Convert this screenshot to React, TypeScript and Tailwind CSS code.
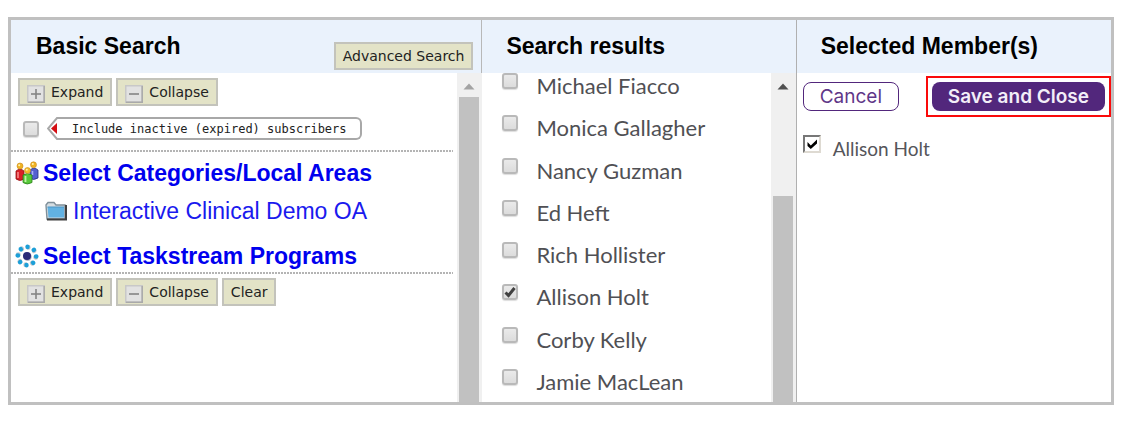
import React, { useState } from 'react';

interface Member {
  id: number;
  name: string;
}

const members: Member[] = [
  { id: 1, name: 'Michael Fiacco' },
  { id: 2, name: 'Monica Gallagher' },
  { id: 3, name: 'Nancy Guzman' },
  { id: 4, name: 'Ed Heft' },
  { id: 5, name: 'Rich Hollister' },
  { id: 6, name: 'Allison Holt' },
  { id: 7, name: 'Corby Kelly' },
  { id: 8, name: 'Jamie MacLean' },
];

function Checkbox({ id, checked, onChange }: { id: string; checked: boolean; onChange: () => void }) {
  return (
    <span className="relative block size-4 shrink-0">
      <input
        id={id}
        type="checkbox"
        checked={checked}
        onChange={onChange}
        className="block size-4 appearance-none rounded-[3px] border-2 border-[#b9b9b9] bg-linear-to-b from-[#eaeaea] to-[#dcdcdc] shadow-[0_1px_1px_#dddddd]"
      />
      {checked && (
        <svg viewBox="0 0 16 16" className="pointer-events-none absolute inset-0 size-4">
          <path d="M3.5 8.5 L6.5 11.5 L12.5 4" fill="none" stroke="#404040" strokeWidth="3" />
        </svg>
      )}
    </span>
  );
}

function ToolButton({ sign, children }: { sign?: 'plus' | 'minus'; children: React.ReactNode }) {
  return (
    <button
      type="button"
      className="flex h-7 items-center gap-1.5 border-2 border-[#c3c3bb] bg-[#e3e3c7] px-[7px] font-['DejaVu_Sans',sans-serif] text-sm whitespace-nowrap text-[#222222]"
    >
      {sign && (
        <svg viewBox="0 0 18 18" className="mt-1 size-[18px]">
          <rect x="0.75" y="0.75" width="16.5" height="16.5" fill="#e2e2e2" stroke="#c8c8c8" strokeWidth="1.5" />
          <path d="M1 17.2 H17.2 V1" fill="none" stroke="#a9a9a9" strokeWidth="1.5" />
          <path d="M4 9 H14" stroke="#858585" strokeWidth="1.6" />
          {sign === 'plus' && <path d="M9 4 V14" stroke="#858585" strokeWidth="1.6" />}
        </svg>
      )}
      {children}
    </button>
  );
}

function Divider() {
  return <div className="mr-1 h-0.5 bg-[repeating-linear-gradient(90deg,#b4b4b4_0_2px,#ffffff_2px_3px)]" />;
}

function Scrollbar({ active, thumb }: { active: boolean; thumb: string }) {
  return (
    <div className="flex w-[25px] shrink-0 flex-col items-center bg-[#f0f0f0] pr-[3px] pl-0.5">
      <svg viewBox="0 0 24 24" className="size-6 shrink-0">
        <path d="M6.5 16.5 L12 10.5 L17.5 16.5 Z" fill={active ? '#505050' : '#a3a3a3'} />
      </svg>
      <div className={`w-5 flex-1 bg-[#c1c1c1] ${thumb}`} />
    </div>
  );
}

function PeopleIcon() {
  return (
    <svg viewBox="0 0 24 24" className="size-6 shrink-0">
      <path d="M1 10 Q5 6.500 9 10 V18 Q5 21 1 18 Z" fill="#d92027" stroke="#8e1414" strokeWidth="0.8" />
      <path d="M15 9 Q19 5.500 23 9 V17 Q18 20 15 17 Z" fill="#5560cf" stroke="#25307f" strokeWidth="0.8" />
      <path d="M3 11 V17" stroke="#f78a8a" strokeWidth="1.6" />
      <path d="M17.500 10 V14" stroke="#a9b0f5" strokeWidth="1.6" />
      <circle cx="5" cy="5" r="3" fill="#f0b323" stroke="#c98c1c" strokeWidth="0.6" />
      <circle cx="18.500" cy="3.800" r="3" fill="#f0b323" stroke="#c98c1c" strokeWidth="0.6" />
      <path d="M8 14 Q12 11 17 14 V21.500 Q12 24.500 8 21.500 Z" fill="#58c93a" stroke="#2b7d1b" strokeWidth="0.8" />
      <path d="M10.500 15 V21" stroke="#c0f3a6" strokeWidth="1.8" />
      <circle cx="12.500" cy="9.500" r="3" fill="#f5bd2c" stroke="#c98c1c" strokeWidth="0.6" />
      <circle cx="11.800" cy="8.700" r="1" fill="#fff2b5" />
      <circle cx="4.200" cy="4.200" r="1" fill="#fff2b5" />
      <circle cx="17.800" cy="3" r="1" fill="#fff2b5" />
    </svg>
  );
}

function FolderIcon() {
  return (
    <svg viewBox="0 0 22 20" className="h-5 w-[22px] shrink-0">
      <path d="M1 4 L3 1.500 H9 L11 4 H20 V18 H2 Z" fill="#d5dde2" stroke="#7f8f99" strokeWidth="1.4" />
      <path d="M2.500 6 H19 V16.500 H3.500 Z" fill="#62b2e2" />
      <path d="M2.500 6 H19" stroke="#4d94c4" strokeWidth="1" />
      <path d="M2 18.500 H21 V4" fill="none" stroke="#3f3f3f" strokeWidth="2" />
    </svg>
  );
}

function ProgramsIcon() {
  const petals = [0, 45, 90, 135, 180, 225, 270, 315];
  return (
    <svg viewBox="0 0 24 24" className="size-6 shrink-0">
      {petals.map((angle) => (
        <g key={angle} transform={`rotate(${angle + 3} 12 12)`}>
          <ellipse cx="12.900" cy="3.200" rx="2.300" ry="2.500" fill="#c2c8cc" />
          <ellipse cx="12" cy="2.800" rx="2.200" ry="2.400" fill="#1c9fd8" />
        </g>
      ))}
      <circle cx="12.600" cy="12.800" r="4.200" fill="#b9b9c4" />
      <circle cx="12" cy="12" r="4" fill="#2b2a78" />
    </svg>
  );
}

export default function App() {
  const [selected, setSelected] = useState<number[]>([6]);
  const [includeInactive, setIncludeInactive] = useState(false);

  const toggle = (id: number) => {
    setSelected(prev => (prev.includes(id) ? prev.filter(s => s !== id) : [...prev, id]));
  };

  return (
    <div className="h-screen bg-white pt-[17px] pr-4 pb-[19px] pl-2 font-['Liberation_Sans',Arial,sans-serif]">
      <div className="grid h-full grid-cols-[471fr_314fr_314fr] border-3 border-[#c0c0c0] bg-white">
        {/* Basic search */}
        <section className="flex min-w-0 flex-col">
          <header className="flex h-[53px] shrink-0 items-center justify-between border-r border-[#b8b8b8] bg-[#eaf2fc] pr-2 pl-[25px]">
            <h2 className="text-[23px] font-bold text-black">Basic Search</h2>
            <div className="mt-[19px]">
              <ToolButton>Advanced Search</ToolButton>
            </div>
          </header>
          <div className="flex min-h-0 flex-1">
            <div className="flex-1 pt-[5px]">
              <div className="flex gap-1 pl-[7px]">
                <ToolButton sign="plus">Expand</ToolButton>
                <ToolButton sign="minus">Collapse</ToolButton>
              </div>
              <div className="flex items-center gap-2 pt-[11px] pb-2.5 pl-3">
                <Checkbox id="inactive" checked={includeInactive} onChange={() => setIncludeInactive(!includeInactive)} />
                <label
                  htmlFor="inactive"
                  className="flex h-[23px] items-center font-['DejaVu_Sans_Mono',monospace] text-xs whitespace-nowrap text-[#222222]"
                >
                  <svg viewBox="0 0 12 23" className="h-[23px] w-3 shrink-0">
                    <path d="M12 1 H10 L1 11.500 L10 22 H12" fill="#ffffff" stroke="#a8a8a8" strokeWidth="2" />
                    <path d="M10 6 V17 L4 11.500 Z" fill="#d40f14" />
                  </svg>
                  <span className="flex h-full items-center rounded-r-md border-y-2 border-r-2 border-[#a8a8a8] px-[13px]">
                    Include inactive (expired) subscribers
                  </span>
                </label>
              </div>
              <Divider />
              <a href="#categories" className="flex h-[42px] items-center gap-1 pl-1 text-[23px] font-bold whitespace-nowrap text-[#0000ee]">
                <PeopleIcon />
                Select Categories/Local Areas
              </a>
              <a href="#demo" className="flex h-[34px] items-center gap-1.5 pl-[34px] text-[23px] whitespace-nowrap text-[#1a1aee]">
                <FolderIcon />
                Interactive Clinical Demo OA
              </a>
              <a href="#programs" className="mt-3 flex h-8 items-center gap-1 pl-1 text-[23px] font-bold whitespace-nowrap text-[#0000ee]">
                <ProgramsIcon />
                Select Taskstream Programs
              </a>
              <Divider />
              <div className="flex gap-1 pt-1 pl-[7px]">
                <ToolButton sign="plus">Expand</ToolButton>
                <ToolButton sign="minus">Collapse</ToolButton>
                <ToolButton>Clear</ToolButton>
              </div>
            </div>
            <Scrollbar active={false} thumb="" />
          </div>
        </section>

        {/* Results */}
        <section className="flex min-w-0 flex-col border-r border-[#b0b0b0]">
          <header className="flex h-[53px] shrink-0 items-center bg-[#eaf2fc] pl-6">
            <h2 className="text-[23px] font-bold text-black">Search results</h2>
          </header>
          <div className="flex min-h-0 flex-1">
            <ul className="flex flex-1 flex-col justify-between pb-[7px]">
              {members.map((member) => (
                <li key={member.id} className="flex items-start gap-[18px] pl-5">
                  <Checkbox id={`member-${member.id}`} checked={selected.includes(member.id)} onChange={() => toggle(member.id)} />
                  <label htmlFor={`member-${member.id}`} className="font-['Lato',sans-serif] text-[22px] leading-[26px] text-[#505054]">
                    {member.name}
                  </label>
                </li>
              ))}
            </ul>
            <Scrollbar active thumb="mt-[99px]" />
          </div>
        </section>

        {/* Selected */}
        <section className="flex min-w-0 flex-col">
          <header className="flex h-[53px] shrink-0 items-center bg-[#eaf2fc] pl-6">
            <h2 className="text-[23px] font-bold text-black">Selected Member(s)</h2>
          </header>
          <div className="flex items-center justify-between pt-[3px] pl-1.5 font-['Inter',sans-serif] text-[19px]">
            <button type="button" className="h-[29px] rounded-lg border border-[#52277c] px-4 leading-6 text-[#5f3788]">
              Cancel
            </button>
            <div className="border-2 border-[#fa0a0a] p-1">
              <button type="button" className="block h-[29px] rounded-lg bg-[#52277c] px-4 leading-6 font-semibold text-[#f3eef8]">
                Save and Close
              </button>
            </div>
          </div>
          <ul className="pt-3.5 pl-1.5">
            {members.filter(m => selected.includes(m.id)).map((member) => (
              <li key={member.id} className="flex items-start gap-3">
                <span className="relative mt-1 block size-[18px]">
                  <input
                    id={`selected-${member.id}`}
                    type="checkbox"
                    checked
                    onChange={() => toggle(member.id)}
                    className="block size-[18px] appearance-none border-2 border-t-[#777777] border-r-[#dedad2] border-b-[#dedad2] border-l-[#777777] bg-white"
                  />
                  <svg viewBox="0 0 18 18" className="pointer-events-none absolute inset-0 size-[18px]">
                    <path d="M4.500 7 L7.800 10.500 L14 4.500 V8.500 L7.800 14 L4.500 11 Z" fill="#000000" />
                  </svg>
                </span>
                <label htmlFor={`selected-${member.id}`} className="mt-1 font-['Lato',sans-serif] text-[19px] leading-7 text-[#55555a]">
                  {member.name}
                </label>
              </li>
            ))}
          </ul>
        </section>
      </div>
    </div>
  );
}
